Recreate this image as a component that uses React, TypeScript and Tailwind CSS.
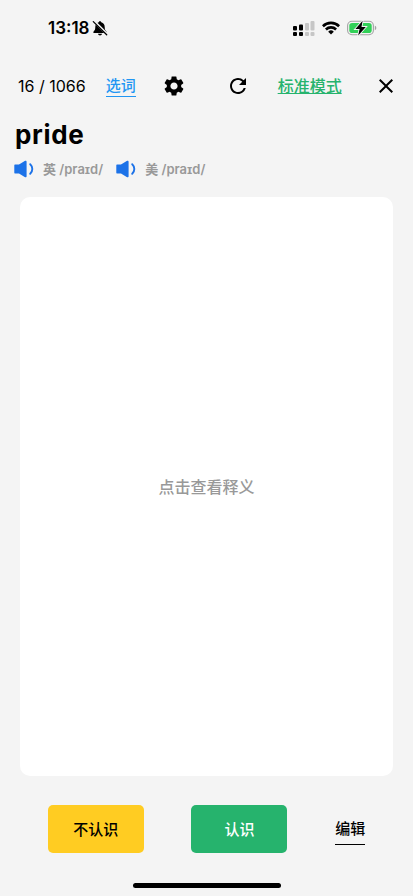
import { MdClose, MdRefresh, MdSettings } from "react-icons/md";

const pronunciations = [
  { region: "英", ipa: "/praɪd/" },
  { region: "美", ipa: "/praɪd/" },
];

const BellOffIcon = () => (
  <svg viewBox="0 0 16 16" className="h-4 w-4" aria-hidden="true">
    <path d="M8 1.2c-.7 0-1.2.5-1.3 1.1C4.500 2.900 3.300 4.700 3.300 6.900c0 2.500-.6 3.400-1.500 4.300-.5.5-.6.8-.6 1.100 0 .5.4.8.9.8h11.800c.5 0 .9-.3.9-.8 0-.3-.1-.6-.6-1.100-.9-.9-1.500-1.800-1.500-4.300 0-2.200-1.200-4-3.400-4.600C9.200 1.700 8.700 1.200 8 1.200z" />
    <path d="M6 13.800h4c-.2 1-1 1.600-2 1.600s-1.800-.6-2-1.600z" />
    <path d="M2 1.200l13 13" stroke="#f4f4f4" strokeWidth="2.600" />
    <path d="M1.300 1.600l13.400 13.200" stroke="black" strokeWidth="1.300" strokeLinecap="round" />
  </svg>
);

const SignalIcon = () => (
  <svg viewBox="0 0 22 15" className="h-[15px] w-[22px]" aria-hidden="true">
    <rect x="0" y="5" width="4" height="4.500" rx="1" />
    <rect x="6" y="3.500" width="4" height="6" rx="1" />
    <rect x="12" y="2" width="4" height="7.500" rx="1" fill="#c6c6c6" />
    <rect x="17.500" y="0" width="4" height="9.500" rx="1" fill="#c6c6c6" />
    <rect x="0" y="11" width="4" height="4" rx="1" />
    <rect x="6" y="11" width="4" height="4" rx="1" />
    <rect x="12" y="11" width="4" height="4" rx="1" fill="#c6c6c6" />
    <rect x="17.500" y="11" width="4" height="4" rx="1" fill="#c6c6c6" />
  </svg>
);

const WifiIcon = () => (
  <svg viewBox="0 0 18 14" className="h-[14px] w-[18px]" fill="none" stroke="black" strokeWidth="2.600" aria-hidden="true">
    <path d="M.9 5.200a11.600 11.600 0 0 1 16.200 0" />
    <path d="M3.900 8.500a7.300 7.300 0 0 1 10.200 0" />
    <path d="M9 13.600l-2.800-2.900a4 4 0 0 1 5.600 0z" fill="black" stroke="none" />
  </svg>
);

const BatteryIcon = () => (
  <svg viewBox="0 0 30 16" className="h-4 w-[30px]" aria-hidden="true">
    <rect x=".6" y="1.300" width="25.800" height="13.400" rx="4.400" fill="none" stroke="#a3a3a3" strokeWidth="1.100" />
    <rect x="2.300" y="3" width="22.400" height="10" rx="2.800" fill="#32d158" />
    <path d="M27.800 5.800c1 .3 1.500 1.200 1.500 2.200s-.5 1.900-1.500 2.200z" fill="#a3a3a3" />
    <path d="M15.600.8L8.400 9h4.200l-1.400 6.400L18.800 7h-4.300z" fill="black" stroke="#f4f4f4" strokeWidth="1.800" paintOrder="stroke" />
  </svg>
);

const SpeakerIcon = () => (
  <svg viewBox="0 0 21 18" className="h-[18px] w-[21px]" fill="#1c72e8" aria-hidden="true">
    <path d="M1.300 4.400H5L10.700 1c1-.7 1.900-.3 1.900.8v14.400c0 1.100-.9 1.500-1.900.8L5 13.600H1.300c-.7 0-1-.4-1-1V5.400c0-.6.3-1 1-1z" />
    <path d="M16.200 4.200c2.800 2.600 2.800 7 0 9.600" fill="none" stroke="#1c72e8" strokeWidth="1.900" strokeLinecap="round" />
  </svg>
);

export default function App() {
  return (
    <div className="flex min-h-screen flex-col bg-[#f4f4f4] font-[Inter,'Noto_Sans_CJK_SC',sans-serif] text-black">
      <div className="flex h-14 items-center justify-between pl-12 pr-9">
        <div className="flex items-center gap-0.5">
          <span className="text-[17px] font-semibold leading-6">13:18</span>
          <BellOffIcon />
        </div>
        <div className="flex items-center gap-[7px]">
          <SignalIcon />
          <WifiIcon />
          <BatteryIcon />
        </div>
      </div>

      <header className="flex h-[60px] items-center pl-[18px] pr-[15px]">
        <span className="text-base">16 / 1066</span>
        <a href="#words" className="ml-5 border-b border-[#2196f3] text-[15px] font-medium leading-5 text-[#2196f3]">
          选词
        </a>
        <button type="button" aria-label="设置" className="ml-[26px]">
          <MdSettings size={24} />
        </button>
        <button type="button" aria-label="刷新" className="ml-10">
          <MdRefresh size={24} />
        </button>
        <a href="#mode" className="ml-7 text-base font-medium text-[#26b36d] underline">
          标准模式
        </a>
        <button type="button" aria-label="关闭" className="ml-auto">
          <MdClose size={24} />
        </button>
      </header>

      <main className="flex flex-1 flex-col pt-px">
        <h1 className="pl-[15px] text-[26px] font-bold leading-9 tracking-wide">pride</h1>
        <div className="mt-1 flex gap-[13px] pl-3.5">
          {pronunciations.map((item) => (
            <button key={item.region} type="button" className="flex items-center gap-2">
              <SpeakerIcon />
              <span className="text-[13px] font-semibold leading-6 text-[#999999]">
                {item.region} {item.ipa}
              </span>
            </button>
          ))}
        </div>
        <button
          type="button"
          className="mx-5 mt-4 flex flex-1 items-center justify-center rounded-[10px] bg-white text-base font-medium text-[#999999]"
        >
          点击查看释义
        </button>
      </main>

      <footer className="pt-[29px]">
        <div className="flex items-center justify-evenly">
          <button type="button" className="h-12 w-24 rounded-[5px] bg-[#ffcc22] pt-0.5 text-[15px] font-medium">
            不认识
          </button>
          <button type="button" className="h-12 w-24 rounded-[5px] bg-[#26b36d] pt-0.5 text-[15px] font-medium text-white">
            认识
          </button>
          <a href="#edit" className="border-b border-black pb-[3px] pt-[5px] text-[15px] font-medium">
            编辑
          </a>
        </div>
        <div className="mx-auto mb-2 mt-[30px] h-[5px] w-[148px] rounded-full bg-black" />
      </footer>
    </div>
  );
}
